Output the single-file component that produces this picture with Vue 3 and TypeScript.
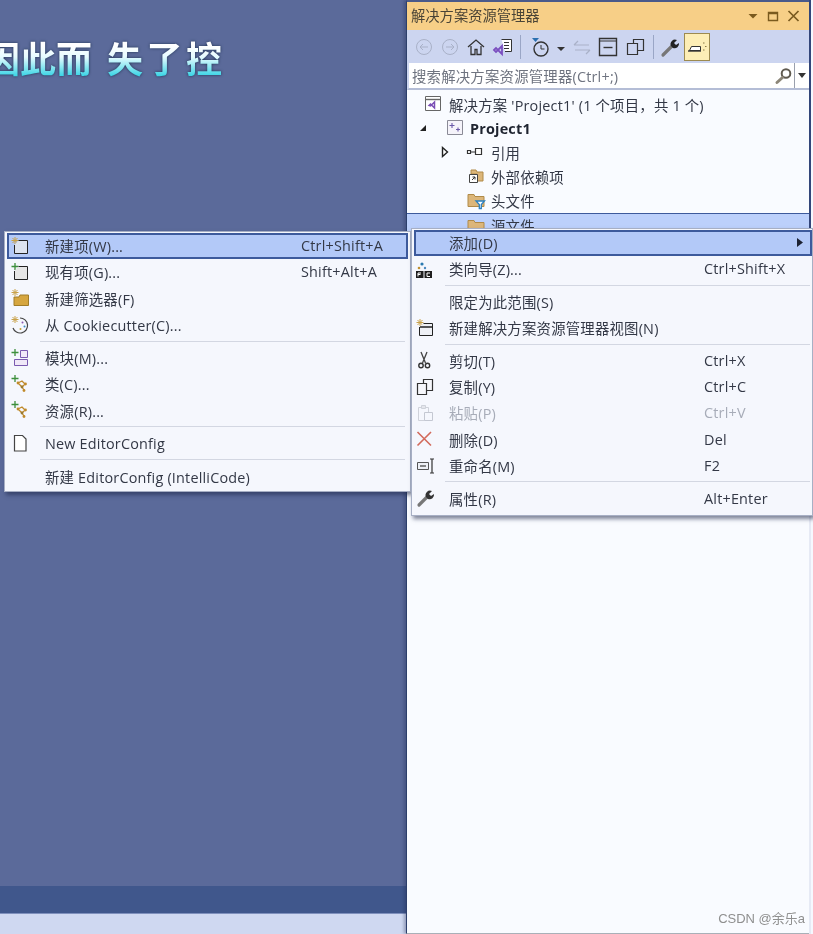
<template>
  <div class="page">
    <section class="editor">
      <h1 class="banner"><span class="lead">因此而</span><span class="tail">失了控</span></h1>
      <div class="spacer"></div>
      <div class="bar-dark"></div>
      <div class="bar-light"></div>
    </section>

    <aside class="explorer">
      <div class="pane">
        <header class="titlebar">
          <span class="title">解决方案资源管理器</span>
          <span class="win">
            <svg width="12" height="12" viewBox="0 0 12 12"><path d="M1.500 4h9L6 8.500z" fill="#7a5a1e" /></svg>
            <svg width="12" height="12" viewBox="0 0 12 12"><path d="M1.500 2.500h9v8h-9zM1.500 3.500h9" fill="none" stroke="#7a5a1e" stroke-width="1.400" /></svg>
            <svg width="13" height="12" viewBox="0 0 12 12"><path d="M1 1l10 10M11 1L1 11" fill="none" stroke="#7a5a1e" stroke-width="1.700" /></svg>
          </span>
        </header>

        <div class="toolbar">
          <template v-for="t in tools" :key="t.key">
            <span v-if="t.sep" class="sep-tool"></span>
            <button v-else class="tool" :class="t.cls">
              <svg :width="t.w" height="22" :viewBox="`0 0 ${t.w} 22`"><g v-html="t.svg"></g></svg>
            </button>
          </template>
        </div>

        <div class="search">
          <span class="placeholder">搜索解决方案资源管理器(Ctrl+;)</span>
          <svg class="lens" width="19" height="18" viewBox="0 0 19 18">
            <circle cx="12" cy="6.500" r="4.300" fill="none" stroke="#5f5a50" stroke-width="2" />
            <path d="M8.500 10.500l-5.500 5" stroke="#8c8678" stroke-width="3" stroke-linecap="round" />
          </svg>
          <span class="drop"><svg width="8" height="5" viewBox="0 0 8 5"><path d="M0 0h8L4 5z" fill="#333" /></svg></span>
        </div>

        <ul class="tree">
          <li v-for="n in tree" :key="n.label" class="node" :class="n.cls">
            <span class="arrow" :style="{ width: n.iconX + 'px', paddingLeft: n.arrowX + 'px' }">
              <svg v-if="n.arrow === 'open'" width="8" height="8" viewBox="0 0 8 8"><path d="M7 1v6H1z" fill="#222" /></svg>
              <svg v-if="n.arrow === 'closed'" width="8" height="12" viewBox="0 0 8 12"><path d="M1.500 1.500l5 4.500-5 4.500z" fill="#fff" stroke="#222" stroke-width="1.400" /></svg>
            </span>
            <svg class="ico" width="20" height="20" viewBox="0 0 20 20"><g v-html="icons[n.icon]"></g></svg>
            <span>{{ n.label }}</span>
          </li>
        </ul>
      </div>
      <div class="csdn">CSDN @余乐a</div>
    </aside>

    <div class="menu menu-left">
      <template v-for="(m, i) in leftMenu" :key="i">
        <div v-if="m.sep" class="sep"></div>
        <div v-else class="item" :class="{ hot: m.hot }">
          <span class="gutter"><svg width="20" height="20" viewBox="0 0 20 20"><g v-if="m.icon" v-html="icons[m.icon]"></g></svg></span>
          <span class="label">{{ m.label }}</span>
          <span class="key">{{ m.key }}</span>
        </div>
      </template>
    </div>

    <div class="menu menu-right">
      <template v-for="(m, i) in rightMenu" :key="i">
        <div v-if="m.sep" class="sep"></div>
        <div v-else class="item" :class="{ hot: m.hot, off: m.off }">
          <span class="gutter"><svg width="20" height="20" viewBox="0 0 20 20"><g v-if="m.icon" v-html="icons[m.icon]"></g></svg></span>
          <span class="label">{{ m.label }}</span>
          <span class="key">{{ m.key }}</span>
          <svg v-if="m.hot" class="sub" width="6" height="9" viewBox="0 0 6 9"><path d="M0 0l6 4.500L0 9z" fill="#1c2233" /></svg>
        </div>
      </template>
    </div>
  </div>
</template>

<script setup lang="ts">
interface MenuRow {
  label?: string;
  key?: string;
  icon?: string;
  hot?: boolean;
  off?: boolean;
  sep?: boolean;
}

interface Tool {
  key: string;
  w?: number;
  cls?: string;
  svg?: string;
  sep?: boolean;
}

const spark = '<path d="M5 1v7M1.500 4.500h7M2.500 2l5 5M7.500 2l-5 5" stroke="#c9a24a" stroke-width="1"/>';
const plus = '<path d="M5 1v7M1.500 4.500h7" stroke="#3c8f3c" stroke-width="1.300"/>';
const cls =
  '<path d="M8 9l4-2 3 3-3 3zM12 13l2 3" fill="none" stroke="#c08a2a" stroke-width="1.300"/><circle cx="8" cy="9" r="1.400" fill="#c08a2a"/><circle cx="15.500" cy="10" r="1.400" fill="#c08a2a"/><circle cx="12" cy="13" r="1.400" fill="#9a7a30"/><circle cx="14" cy="16.500" r="1.400" fill="#c08a2a"/>';
const folder = '<path d="M2 4.500h6l1 2h9v10H2z" fill="#dcb67a" stroke="#b08a48"/>';

const icons: Record<string, string> = {
  solution:
    '<path d="M1.500 2.500h15v14h-15z" fill="#fff" stroke="#666"/><path d="M1.500 5.500h15" stroke="#666" stroke-width="1.400"/><path d="M5 11.500l1.500-1.500 4 4V8l-4 4-1.500-.5z" fill="none" stroke="#7b4fb5" stroke-width="1.500"/>',
  project:
    '<path d="M2.500 2.500h15v14h-15z" fill="#f5f3fa" stroke="#8a8a96"/><path d="M7 5v5M4.500 7.500h5M13 9.500v4M11 11.500h4" stroke="#6b5aa8" stroke-width="1.100"/>',
  refs: '<path d="M1.500 8.500h3v3h-3zM9.500 6.500h6v6h-6zM4.500 10h5" fill="#fff" stroke="#333" stroke-width="1.200"/>',
  external:
    '<path d="M5 4h5l1 2h6v9H11V8H5z" fill="#dcb67a" stroke="#b08a48"/><path d="M3.500 8.500h8v8h-8z" fill="#fff" stroke="#444"/><path d="M6 14l3-3M6.500 11H9v2.500" fill="none" stroke="#333"/>',
  headers: folder + '<path d="M10 11h8.500l-3.200 3.500V18.500h-2v-4z" fill="#fff" stroke="#2a80c0" stroke-width="1.300"/>',
  source: folder,
  newItem: spark + '<path d="M8.500 4.500h9v13h-13V9" fill="#dde3ef" stroke="#222"/>',
  existing: plus + '<path d="M8.500 4.500h9v13h-13V9" fill="#e6e6e6" stroke="#222"/>',
  newFilter: spark + '<path d="M4 9h5l1-2h8.500v10.500H4z" fill="#d6a63f" stroke="#a07c28"/>',
  cookie:
    spark +
    '<path d="M10 3a7.500 7.500 0 1 1-7 10" fill="none" stroke="#444" stroke-width="1.200"/><circle cx="12.500" cy="7.500" r="1" fill="#8a5ab0"/><circle cx="14.500" cy="11.500" r="1" fill="#3a8ac0"/><circle cx="10.500" cy="14" r="1" fill="#c0a030"/>',
  module: plus + '<path d="M10.500 2.500h7v7h-7zM4.500 11.500h13v6h-13z" fill="#f0e8f8" stroke="#7a5ab0"/>',
  cls: plus + cls,
  file: '<path d="M4.500 2.500h8l3.500 3.500v12h-11.500z" fill="#fff" stroke="#444" stroke-width="1.200"/>',
  wizard:
    '<circle cx="7" cy="5" r="1.600" fill="#2a7ab0"/><circle cx="4" cy="9" r="1.300" fill="#c09030"/><circle cx="10" cy="9" r="1.200" fill="#4a8ac0"/><path d="M1 12h7.500v7H1zM9.500 12h7.500v7H9.500z" fill="#1e1e1e"/><path d="M3 14h3M3 14v3.500M3 15.500h2.500M15 14h-3v3.500h3" fill="none" stroke="#fff"/>',
  viewNew:
    spark + '<path d="M8.500 5.500h9v12h-13V9" fill="#eef0f5" stroke="#222"/><path d="M5 9h13" stroke="#222" stroke-width="1.500"/>',
  cut: '<path d="M6 2l4.500 11M12 2L7.500 13" fill="none" stroke="#444" stroke-width="1.300"/><circle cx="6" cy="15.500" r="2.200" fill="none" stroke="#333" stroke-width="1.400"/><circle cx="12.500" cy="15.500" r="2.200" fill="none" stroke="#333" stroke-width="1.400"/>',
  copy: '<path d="M8.500 2.500h9v11h-9z" fill="#f6f7fb" stroke="#333" stroke-width="1.200"/><path d="M2.500 6.500h9v11h-9z" fill="#f6f7fb" stroke="#333" stroke-width="1.200"/>',
  paste:
    '<path d="M3.500 4.500h10v13h-10z" fill="none" stroke="#cfd2da"/><path d="M6.500 2.500h4v3h-4z" fill="#e4e6ec" stroke="#cfd2da"/><path d="M9.500 9.500h8v8h-8z" fill="#f5f7fd" stroke="#c4c8d2"/>',
  del: '<path d="M2.500 3l13.500 13.500M16 3L2.500 16.500" stroke="#d26a5c" stroke-width="1.600"/>',
  rename:
    '<path d="M2.500 6.500h11v7h-11z" fill="#eef0f5" stroke="#555"/><path d="M5 10h6" stroke="#555" stroke-width="1.400"/><path d="M15 3h4M15 17h4M17 3v14" fill="none" stroke="#333" stroke-width="1.200"/>',
  wrench:
    '<path d="M4 17l8-8" stroke="#777" stroke-width="3.200" stroke-linecap="round"/><path d="M11 9a4.500 4.500 0 0 1 6-6l-3 3 2 2 3-2a4.500 4.500 0 0 1-6 5z" fill="#333"/>',
};

const tools: Tool[] = [
  { key: 'back', w: 20, cls: 'dim', svg: '<circle cx="10" cy="11" r="7.500" fill="none" stroke="#a9b1c8"/><path d="M14 11H6M9 8l-3 3 3 3" fill="none" stroke="#a9b1c8"/>' },
  { key: 'forward', w: 20, cls: 'dim', svg: '<circle cx="10" cy="11" r="7.500" fill="none" stroke="#a9b1c8"/><path d="M6 11h8M11 8l3 3-3 3" fill="none" stroke="#a9b1c8"/>' },
  { key: 'home', w: 20, svg: '<path d="M2 11l8-7 8 7M5 10v8.500h4v-5h2v5h4V10" fill="none" stroke="#333" stroke-width="1.300"/>' },
  { key: 'switch', w: 22, svg: '<path d="M9.500 3.500h10v12H13" fill="#fff" stroke="#333"/><path d="M12 6.500h5M12 9.500h5M12 12.500h5" stroke="#333"/><path d="M2 14l2-2 6 6V10l-6 6-2-2z" fill="none" stroke="#7b4fc0" stroke-width="1.800"/>' },
  { key: 'sep1', sep: true },
  { key: 'history', w: 40, svg: '<path d="M5 2h7L8.500 6z" fill="#2a70b0"/><circle cx="14" cy="13" r="7" fill="none" stroke="#333" stroke-width="1.400"/><path d="M14 9v4h3.500" fill="none" stroke="#333"/><path d="M30 11h8l-4 4z" fill="#333"/>' },
  { key: 'sync', w: 18, cls: 'dim', svg: '<path d="M1 9h15M5 5L1 9M17 14H2M13 18l4-4" fill="none" stroke="#a9b1c8" stroke-width="1.200"/>' },
  { key: 'collapse', w: 22, svg: '<path d="M2.500 2.500h17v17h-17z" fill="none" stroke="#333" stroke-width="1.400"/><path d="M6.500 11.500h9" stroke="#333" stroke-width="1.400"/><path d="M2.500 5h17" stroke="#333"/>' },
  { key: 'showAll', w: 22, svg: '<path d="M8.500 3.500h10v11h-10z" fill="#ccd5f0" stroke="#333" stroke-width="1.200"/><path d="M2.500 7.500h10v11h-10z" fill="#ccd5f0" stroke="#333" stroke-width="1.200"/>' },
  { key: 'sep2', sep: true },
  { key: 'props', w: 20, svg: '<path d="M3 19l9-9" stroke="#777" stroke-width="3.200" stroke-linecap="round"/><path d="M11 10a4.500 4.500 0 0 1 6-6l-3 3 2 2 3-2a4.500 4.500 0 0 1-6 5z" fill="#222"/>' },
  { key: 'pin', w: 22, cls: 'pressed', svg: '<path d="M3.500 14.500h11v-4h-9z" fill="#fff" stroke="#333"/><path d="M2 15h13" stroke="#333" stroke-width="1.400"/><path d="M17 7h1.500M19 10.500h1.500M17 14h1.500" stroke="#8a7a44"/>' },
];

const tree = [
  { label: "解决方案 'Project1' (1 个项目，共 1 个)", icon: 'solution', arrow: '', arrowX: 0, iconX: 17, cls: '' },
  { label: 'Project1', icon: 'project', arrow: 'open', arrowX: 12, iconX: 38, cls: 'row-project' },
  { label: '引用', icon: 'refs', arrow: 'closed', arrowX: 34, iconX: 59, cls: '' },
  { label: '外部依赖项', icon: 'external', arrow: '', arrowX: 0, iconX: 59, cls: '' },
  { label: '头文件', icon: 'headers', arrow: '', arrowX: 0, iconX: 59, cls: '' },
  { label: '源文件', icon: 'source', arrow: '', arrowX: 0, iconX: 59, cls: 'row-selected' },
];

const leftMenu: MenuRow[] = [
  { label: '新建项(W)...', key: 'Ctrl+Shift+A', icon: 'newItem', hot: true },
  { label: '现有项(G)...', key: 'Shift+Alt+A', icon: 'existing' },
  { label: '新建筛选器(F)', icon: 'newFilter' },
  { label: '从 Cookiecutter(C)...', icon: 'cookie' },
  { sep: true },
  { label: '模块(M)...', icon: 'module' },
  { label: '类(C)...', icon: 'cls' },
  { label: '资源(R)...', icon: 'cls' },
  { sep: true },
  { label: 'New EditorConfig', icon: 'file' },
  { sep: true },
  { label: '新建 EditorConfig (IntelliCode)' },
];

const rightMenu: MenuRow[] = [
  { label: '添加(D)', hot: true },
  { label: '类向导(Z)...', key: 'Ctrl+Shift+X', icon: 'wizard' },
  { sep: true },
  { label: '限定为此范围(S)' },
  { label: '新建解决方案资源管理器视图(N)', icon: 'viewNew' },
  { sep: true },
  { label: '剪切(T)', key: 'Ctrl+X', icon: 'cut' },
  { label: '复制(Y)', key: 'Ctrl+C', icon: 'copy' },
  { label: '粘贴(P)', key: 'Ctrl+V', icon: 'paste', off: true },
  { label: '删除(D)', key: 'Del', icon: 'del' },
  { label: '重命名(M)', key: 'F2', icon: 'rename' },
  { sep: true },
  { label: '属性(R)', key: 'Alt+Enter', icon: 'wrench' },
];
</script>

<style>
html,
body {
  margin: 0;
  background: #5b6a9a;
}
</style>

<style scoped>
.page {
  position: relative;
  display: flex;
  width: 813px;
  height: 934px;
  overflow: hidden;
  font-family: "Open Sans", "Noto Sans CJK SC", sans-serif;
  font-size: 14.4px;
  letter-spacing: 0.2px;
  color: #333846;
  background: #5b6a9a;
  filter: blur(0.4px);
}

/* left side, the editor behind the menus */
.editor {
  width: 406px;
  display: flex;
  flex-direction: column;
  flex: none;
  overflow: hidden;
}

.banner {
  margin: 34px 0 0 -16px;
  display: flex;
  font-family: "Noto Sans CJK SC", sans-serif;
  font-size: 36px;
  font-weight: 700;
  line-height: 46px;
  white-space: nowrap;
  background: linear-gradient(to bottom, #ffffff 25%, #e6fbff 50%, #3fd6e6 90%);
  -webkit-background-clip: text;
  background-clip: text;
  color: transparent;
  filter: drop-shadow(0 0 1.5px #1f3352);
}

.lead {
  letter-spacing: 0;
}

.tail {
  margin-left: 15px;
  letter-spacing: 3.5px;
}

.spacer {
  flex: 1;
}

.bar-dark {
  height: 27px;
  background: #40578c;
}

.bar-light {
  height: 21px;
  background: #cfd8f1;
  border-top: 1px solid #7f90bd;
  box-sizing: border-box;
}

/* right side, the solution explorer */
.explorer {
  position: relative;
  flex: 1;
  background: linear-gradient(to bottom, #33467a 228px, #e6eaf5 228px) no-repeat 403px 0 / 2px 100%, #f6f8fe;
  box-shadow: -2px 0 3px rgba(30, 40, 80, 0.35);
  display: flex;
  flex-direction: column;
}

.pane {
  flex: 1;
  width: 403px;
  box-sizing: border-box;
  background: #f9fbff;
  border-top: 2px solid #4a5a8a;
  border-left: 1px solid #2c3f6b;
  border-bottom: 1px solid #a9b0b8;
  display: flex;
  flex-direction: column;
}

.titlebar {
  height: 28px;
  flex: none;
  background: #f7cf87;
  display: flex;
  align-items: center;
  justify-content: space-between;
  padding: 0 9px 0 4px;
  box-sizing: border-box;
}

.title {
  font-size: 14.3px;
  letter-spacing: 0;
  color: #4a4436;
  padding-bottom: 3px;
}

.win {
  display: flex;
  gap: 8px;
  align-items: center;
}

.toolbar {
  height: 33px;
  flex: none;
  background: #ccd5f0;
  display: flex;
  align-items: center;
  padding-left: 7px;
  gap: 6px;
  box-sizing: border-box;
}

.tool {
  all: unset;
  display: flex;
  align-items: center;
  justify-content: center;
  height: 26px;
}

.sep-tool {
  width: 1px;
  height: 24px;
  background: #9aa6c6;
}

.pressed {
  width: 26px;
  height: 28px;
  background: #fdeeb6;
  border: 1px solid #9c8a50;
  box-sizing: border-box;
  margin-left: -2px;
}

.search {
  height: 27px;
  flex: none;
  display: flex;
  align-items: center;
  background: #ffffff;
  border-bottom: 2px solid #b4bdd6;
  border-left: 2px solid #ccd5f0;
  box-sizing: border-box;
  padding-left: 3px;
}

.placeholder {
  flex: 1;
  color: #6f7480;
}

.lens {
  margin-right: 1px;
}

.drop {
  width: 15px;
  height: 100%;
  display: flex;
  align-items: center;
  justify-content: center;
  border-left: 1px solid #9aa0ad;
  box-sizing: border-box;
}

.tree {
  margin: 2px 0 0;
  padding: 0;
  list-style: none;
}

.node {
  height: 24px;
  display: flex;
  align-items: center;
  box-sizing: border-box;
}

.arrow {
  flex: none;
  display: flex;
  align-items: center;
  box-sizing: border-box;
}

.ico {
  flex: none;
  margin-right: 5px;
}

.row-project {
  font-weight: 700;
  color: #1f2430;
}

.row-selected {
  margin-top: 1px;
  background: #bcd0fb;
  border-top: 1px solid #3d5a9c;
}

/* context menus lie over the page */
.menu {
  position: absolute;
  box-sizing: border-box;
  background: #f5f7fd;
  border: 1px solid #a7afc4;
  box-shadow: 2px 3px 4px rgba(28, 36, 70, 0.55);
  padding: 0.5px 2px;
}

.menu-left {
  left: 4px;
  top: 231px;
  width: 407px;
  height: 261px;
}

.menu-right {
  left: 411px;
  top: 228px;
  width: 402px;
  height: 288px;
  padding-top: 0.5px;
  padding-right: 0;
}

.item {
  position: relative;
  height: 26.3px;
  display: flex;
  align-items: center;
  box-sizing: border-box;
  border: 1px solid transparent;
  white-space: nowrap;
}

.item.hot {
  background: #b3c9f8;
  border-color: #3d5a9c;
  box-shadow: inset 0 0 0 1px #3d5a9c;
}

.off {
  color: #a7acb8;
}

.gutter {
  flex: none;
  display: flex;
  align-items: center;
  box-sizing: border-box;
  width: 34px;
}

.menu-left .gutter {
  width: 37px;
  padding-left: 2px;
}

.label {
  flex: none;
  width: 256px;
}

.menu-right .label {
  width: 255px;
}

.sub {
  position: absolute;
  right: 8px;
  top: 50%;
  margin-top: -4.5px;
}

.sep {
  height: 1px;
  background: #d3d7e2;
}

.menu-left .sep {
  margin: 2.85px 3px 2.85px 33px;
}

.menu-right .sep {
  margin: 2.65px 2px 2.65px 31px;
}

.csdn {
  position: absolute;
  right: 8px;
  bottom: 7px;
  font-family: "Liberation Sans", "Noto Sans CJK SC", sans-serif;
  font-size: 13px;
  letter-spacing: 0;
  color: #8f8f8f;
}
</style>
